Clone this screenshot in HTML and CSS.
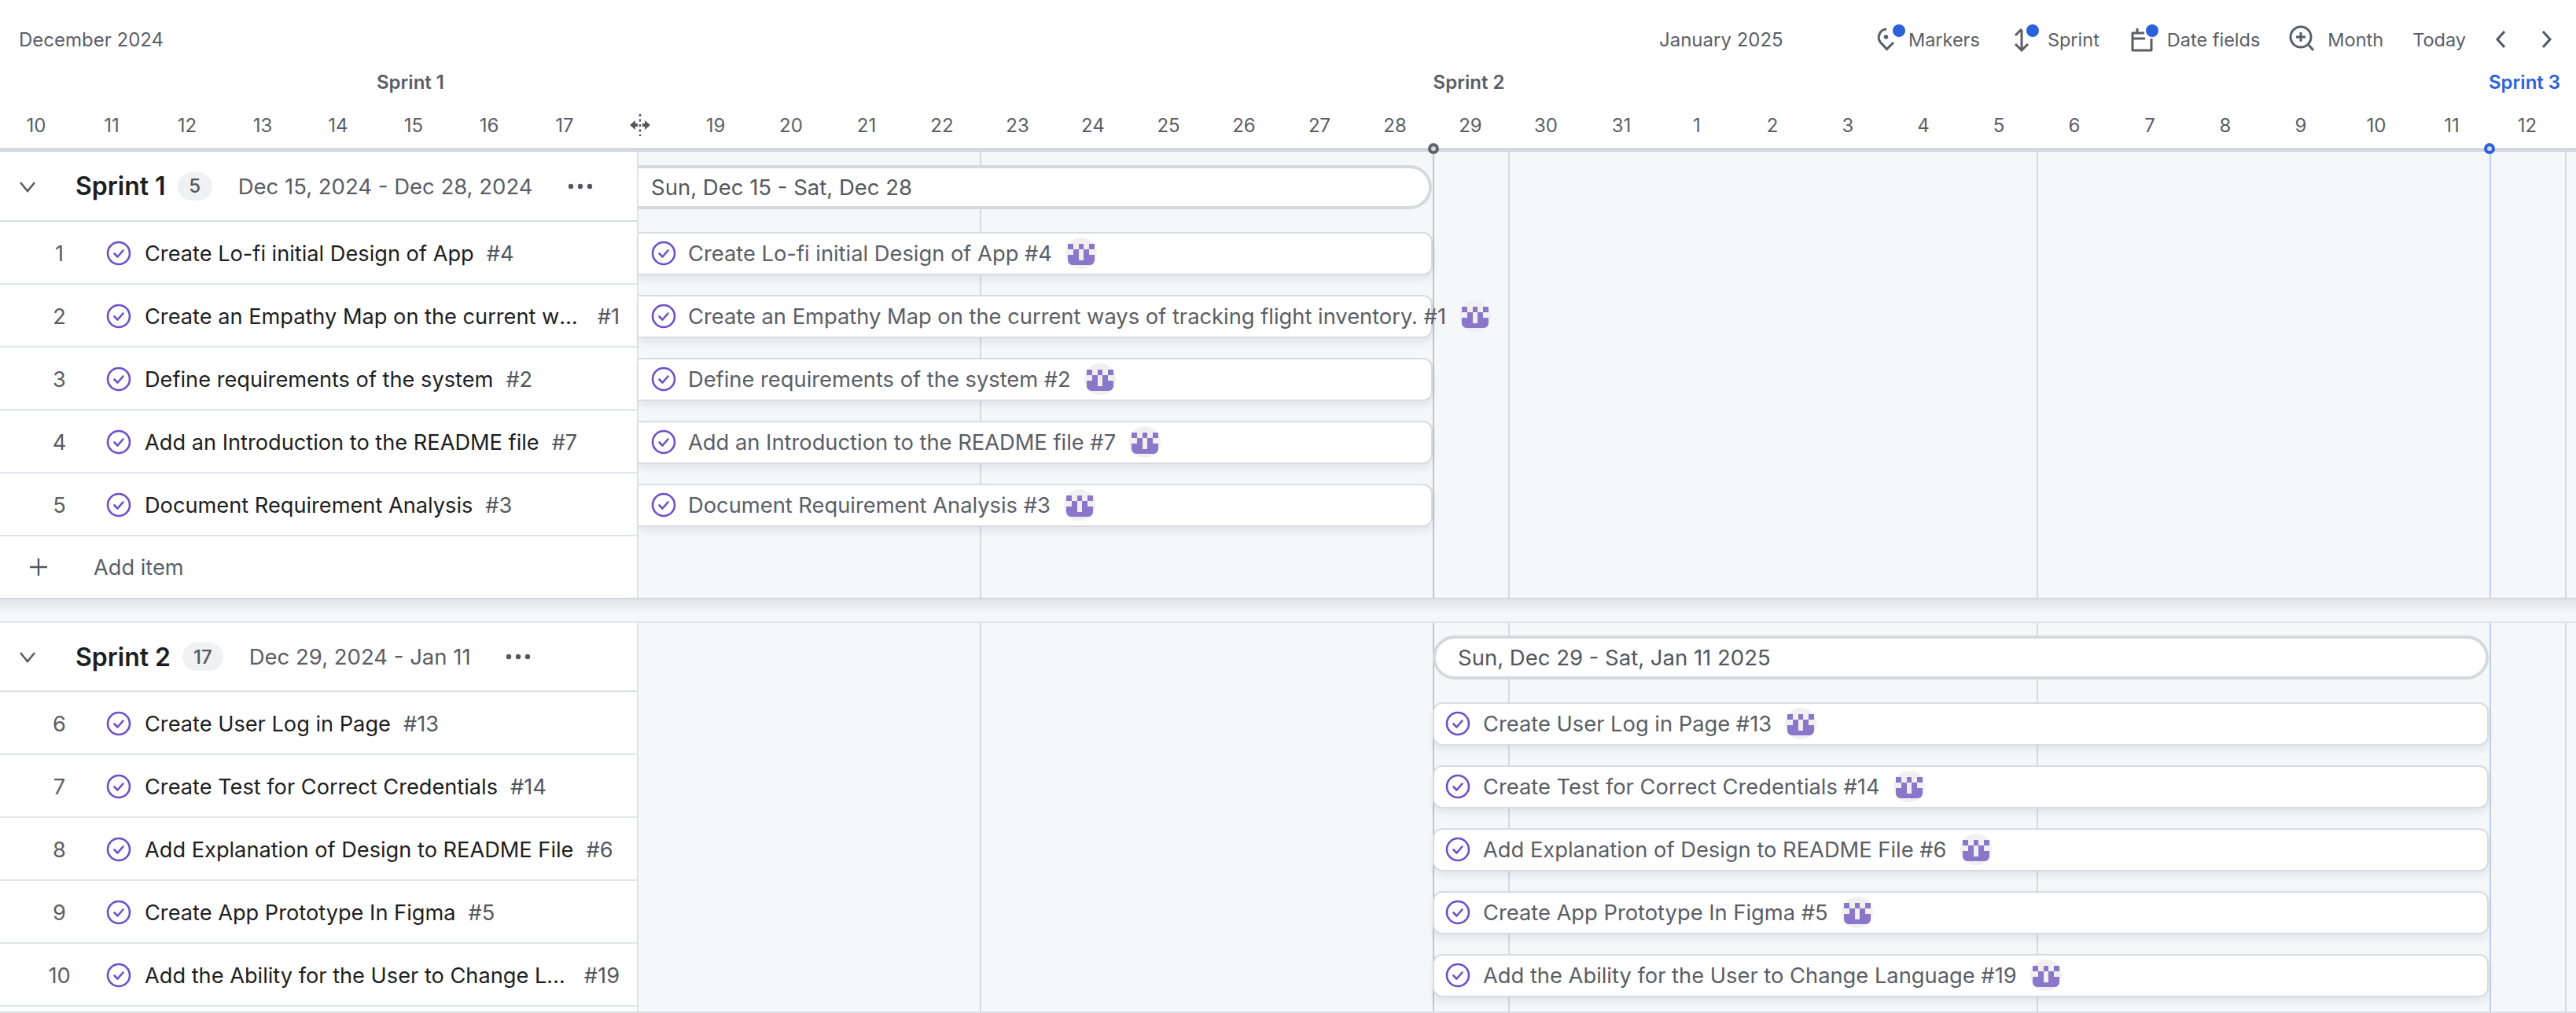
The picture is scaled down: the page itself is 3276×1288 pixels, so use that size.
FILE: index.html
```html
<!DOCTYPE html>
<html>
    <head>
        <title>Roadmap</title>
        <link rel="stylesheet" href="styles.css">
    </head>
    <body>
        <!-- shared icons -->
        <svg class="defs" width="0" height="0">
            <symbol id="check" viewBox="0 0 32 32">
                <circle cx="16" cy="16" r="14" fill="none" stroke="#6f4fc6" stroke-width="2.6"/>
                <path d="M10.5 16.5 L14.5 20.5 L21.5 12.5" fill="none" stroke="#6f4fc6" stroke-width="2.6" stroke-linecap="round" stroke-linejoin="round"/>
            </symbol>
            <symbol id="avatar" viewBox="0 0 40 40">
                <circle cx="20" cy="20" r="20" fill="#f0f0f1"/>
                <path fill="#8b77c9" d="M3 8h7v7H3zM17 8h6v7h-6zM30 8h7v7h-7zM10 15h7v7h-7zM23 15h7v7h-7zM3 22h14v7h6v-7h14v7a6 6 0 0 1-6 6H9a6 6 0 0 1-6-6z"/>
            </symbol>
            <symbol id="chevron" viewBox="0 0 24 24">
                <path d="M3 7 L12 18 L21 7" fill="none" stroke="#53575e" stroke-width="2.4"/>
            </symbol>
            <symbol id="dots" viewBox="0 0 32 8">
                <circle cx="4" cy="4" r="3.2" fill="#53575e"/>
                <circle cx="16" cy="4" r="3.2" fill="#53575e"/>
                <circle cx="28" cy="4" r="3.2" fill="#53575e"/>
            </symbol>
        </svg>

        <div class="gantt">
            <!-- Timeline header -->
            <div class="top">
                <div class="toolbar">
                    <span class="month first">December 2024</span>
                    <span class="month">January 2025</span>
                    <div class="tools">
                        <span class="tool tool-markers">
                            <span class="tool-icon">
                                <svg width="32" height="32" viewBox="0 0 32 32" fill="none" stroke="#5a5e66" stroke-width="3"><path d="M14 3 A10.5 10.5 0 0 0 7 20.5 L14.500 28.500 L23 20"/><circle cx="13.500" cy="13" r="2.800" fill="#5a5e66" stroke="none"/></svg>
                                <span class="dot"></span>
                            </span>
                            Markers
                        </span>
                        <span class="tool tool-sprint">
                            <span class="tool-icon">
                                <svg width="32" height="32" viewBox="0 0 32 32" fill="none" stroke="#5a5e66" stroke-width="3"><path d="M16 4 V30 M8 22 L16 30 L24 22 M8 11 L16 3"/></svg>
                                <span class="dot"></span>
                            </span>
                            Sprint
                        </span>
                        <span class="tool tool-dates">
                            <span class="tool-icon">
                                <svg width="32" height="32" viewBox="0 0 32 32" fill="none" stroke="#5a5e66" stroke-width="3"><path d="M20 8 H5 V30 H29 V15 M5 15 H21 M11 2 V8" stroke-linejoin="round"/></svg>
                                <span class="dot"></span>
                            </span>
                            Date fields
                        </span>
                        <span class="tool tool-month">
                            <svg width="36" height="36" viewBox="0 0 36 36" fill="none" stroke="#5a5e66" stroke-width="3"><circle cx="18" cy="15" r="13"/><path d="M18 9 V21 M12 15 H24 M27.500 24.500 L34 32"/></svg>
                            Month
                        </span>
                        <span class="tool tool-today">Today</span>
                        <svg class="nav nav-prev" width="14" height="24" viewBox="0 0 14 24" fill="none" stroke="#53575e" stroke-width="3"><path d="M12 2 L3 12 L12 22"/></svg>
                        <svg class="nav nav-next" width="14" height="24" viewBox="0 0 14 24" fill="none" stroke="#53575e" stroke-width="3"><path d="M2 2 L11 12 L2 22"/></svg>
                    </div>
                </div>
                <div class="sprints">
                    <span class="sprint-name s1">Sprint 1</span>
                    <span class="sprint-name s2">Sprint 2</span>
                    <span class="sprint-name s3">Sprint 3</span>
                </div>
                <div class="dates">
                    <span>10</span><span>11</span><span>12</span><span>13</span><span>14</span><span>15</span><span>16</span><span>17</span>
                    <span class="resize">
                        <svg width="30" height="30" viewBox="0 0 30 30"><path d="M15 1 V29" stroke="#53575e" stroke-width="2.500" stroke-dasharray="3 3.500" fill="none"/><path d="M2 15 L9 9 V13 H12 V17 H9 V21 Z M28 15 L21 9 V13 H18 V17 H21 V21 Z" fill="#53575e"/></svg>
                    </span>
                    <span>19</span><span>20</span><span>21</span><span>22</span><span>23</span><span>24</span><span>25</span><span>26</span><span>27</span><span>28</span><span>29</span><span>30</span><span>31</span>
                    <span>1</span><span>2</span><span>3</span><span>4</span><span>5</span><span>6</span><span>7</span><span>8</span><span>9</span><span>10</span><span>11</span><span>12</span>
                </div>
                <span class="pin pin-dark"></span>
                <span class="pin pin-blue"></span>
            </div>

            <!-- Sprint 1 -->
            <section class="group group-one">
                <div class="side">
                    <div class="group-head">
                        <svg class="chev" width="24" height="24"><use href="#chevron"/></svg>
                        <span class="group-name">Sprint 1</span>
                        <span class="badge">5</span>
                        <span class="group-dates">Dec 15, 2024 - Dec 28, 2024</span>
                        <svg class="more" width="32" height="8"><use href="#dots"/></svg>
                    </div>
                    <div class="row"><span class="num">1</span><svg class="check" width="32" height="32"><use href="#check"/></svg><span class="title">Create Lo-fi initial Design of App</span><span class="id">#4</span></div>
                    <div class="row"><span class="num">2</span><svg class="check" width="32" height="32"><use href="#check"/></svg><span class="title">Create an Empathy Map on the current ways of tracking flight inventory.</span><span class="id">#1</span></div>
                    <div class="row"><span class="num">3</span><svg class="check" width="32" height="32"><use href="#check"/></svg><span class="title">Define requirements of the system</span><span class="id">#2</span></div>
                    <div class="row"><span class="num">4</span><svg class="check" width="32" height="32"><use href="#check"/></svg><span class="title">Add an Introduction to the README file</span><span class="id">#7</span></div>
                    <div class="row"><span class="num">5</span><svg class="check" width="32" height="32"><use href="#check"/></svg><span class="title">Document Requirement Analysis</span><span class="id">#3</span></div>
                    <div class="add-row">
                        <svg width="24" height="24" viewBox="0 0 24 24" fill="none" stroke="#53575e" stroke-width="2.400"><path d="M12 1 V23 M1 12 H23"/></svg>
                        <span>Add item</span>
                    </div>
                </div>
                <div class="chart">
                    <div class="lane-head"><div class="pill">Sun, Dec 15 - Sat, Dec 28</div></div>
                    <div class="lane"><div class="bar"><svg class="check" width="32" height="32"><use href="#check"/></svg><span>Create Lo-fi initial Design of App #4</span><svg class="avatar" width="40" height="40"><use href="#avatar"/></svg></div></div>
                    <div class="lane"><div class="bar"><svg class="check" width="32" height="32"><use href="#check"/></svg><span>Create an Empathy Map on the current ways of tracking flight inventory. #1</span><svg class="avatar" width="40" height="40"><use href="#avatar"/></svg></div></div>
                    <div class="lane"><div class="bar"><svg class="check" width="32" height="32"><use href="#check"/></svg><span>Define requirements of the system #2</span><svg class="avatar" width="40" height="40"><use href="#avatar"/></svg></div></div>
                    <div class="lane"><div class="bar"><svg class="check" width="32" height="32"><use href="#check"/></svg><span>Add an Introduction to the README file #7</span><svg class="avatar" width="40" height="40"><use href="#avatar"/></svg></div></div>
                    <div class="lane"><div class="bar"><svg class="check" width="32" height="32"><use href="#check"/></svg><span>Document Requirement Analysis #3</span><svg class="avatar" width="40" height="40"><use href="#avatar"/></svg></div></div>
                </div>
            </section>

            <div class="group-gap"></div>

            <!-- Sprint 2 -->
            <section class="group group-two">
                <div class="side">
                    <div class="group-head">
                        <svg class="chev" width="24" height="24"><use href="#chevron"/></svg>
                        <span class="group-name">Sprint 2</span>
                        <span class="badge">17</span>
                        <span class="group-dates">Dec 29, 2024 - Jan 11</span>
                        <svg class="more" width="32" height="8"><use href="#dots"/></svg>
                    </div>
                    <div class="row"><span class="num">6</span><svg class="check" width="32" height="32"><use href="#check"/></svg><span class="title">Create User Log in Page</span><span class="id">#13</span></div>
                    <div class="row"><span class="num">7</span><svg class="check" width="32" height="32"><use href="#check"/></svg><span class="title">Create Test for Correct Credentials</span><span class="id">#14</span></div>
                    <div class="row"><span class="num">8</span><svg class="check" width="32" height="32"><use href="#check"/></svg><span class="title">Add Explanation of Design to README File</span><span class="id">#6</span></div>
                    <div class="row"><span class="num">9</span><svg class="check" width="32" height="32"><use href="#check"/></svg><span class="title">Create App Prototype In Figma</span><span class="id">#5</span></div>
                    <div class="row"><span class="num">10</span><svg class="check" width="32" height="32"><use href="#check"/></svg><span class="title">Add the Ability for the User to Change Language</span><span class="id">#19</span></div>
                </div>
                <div class="chart">
                    <div class="lane-head"><div class="pill">Sun, Dec 29 - Sat, Jan 11 2025</div></div>
                    <div class="lane"><div class="bar"><svg class="check" width="32" height="32"><use href="#check"/></svg><span>Create User Log in Page #13</span><svg class="avatar" width="40" height="40"><use href="#avatar"/></svg></div></div>
                    <div class="lane"><div class="bar"><svg class="check" width="32" height="32"><use href="#check"/></svg><span>Create Test for Correct Credentials #14</span><svg class="avatar" width="40" height="40"><use href="#avatar"/></svg></div></div>
                    <div class="lane"><div class="bar"><svg class="check" width="32" height="32"><use href="#check"/></svg><span>Add Explanation of Design to README File #6</span><svg class="avatar" width="40" height="40"><use href="#avatar"/></svg></div></div>
                    <div class="lane"><div class="bar"><svg class="check" width="32" height="32"><use href="#check"/></svg><span>Create App Prototype In Figma #5</span><svg class="avatar" width="40" height="40"><use href="#avatar"/></svg></div></div>
                    <div class="lane"><div class="bar"><svg class="check" width="32" height="32"><use href="#check"/></svg><span>Add the Ability for the User to Change Language #19</span><svg class="avatar" width="40" height="40"><use href="#avatar"/></svg></div></div>
                </div>
            </section>
        </div>
    </body>
</html>
```

FILE: styles.css
```css
*{
    box-sizing: border-box;
}
body{
    font-family: Inter, "Liberation Sans", sans-serif;
    margin: 0;
    background-color: #fff;
    color: #1d1e21;
    font-size: 27.2px;
}
.defs{
    position: absolute;
}
.gantt{
    display: flex;
    flex-direction: column;
    width: 3276px;
    height: 1288px;
    overflow: hidden;
    border-bottom: 2px solid #dde0e5;
}

/* header */
.top{
    position: relative;
    height: 193px;
    flex: none;
    border-bottom: 5px solid #d2d8de;
    color: #5a5e66;
    font-size: 24px;
}
.toolbar{
    display: flex;
    align-items: center;
    height: 78px;
    padding-top: 22px;
}
.month{
    flex: none;
    white-space: nowrap;
}
.month.first{
    width: 2110px;
    padding-left: 24px;
}
.tools{
    display: flex;
    align-items: center;
    margin-left: auto;
    padding-right: 30px;
    font-size: 23.5px;
}
.tool{
    display: flex;
    align-items: center;
    white-space: nowrap;
}
.tool-icon{
    position: relative;
    display: flex;
    margin-right: 17px;
}
.tool-markers .tool-icon{
    margin-right: 10px;
}
.tool-sprint, .tool-dates, .tool-today{
    margin-left: 37px;
}
.tool-month{
    margin-left: 34px;
    gap: 16px;
}
.dot{
    position: absolute;
    top: -3px;
    right: -6px;
    width: 16px;
    height: 16px;
    border-radius: 50%;
    background-color: #2b62d9;
}
.nav-prev{
    margin-left: 37px;
}
.nav-next{
    margin-left: 45px;
}
.sprints{
    display: flex;
    align-items: center;
    height: 52px;
    font-weight: 600;
}
.sprint-name{
    text-align: center;
    white-space: nowrap;
}
.s1{
    width: 1044px;
}
.s2{
    width: 1648px;
}
.s3{
    margin-left: 473px;
    color: #2b62d9;
}
.dates{
    display: grid;
    grid-template-columns: repeat(34, 96px);
    align-items: center;
    height: 58px;
    margin-left: -2px;
    text-align: center;
}
.resize{
    display: flex;
    justify-content: center;
}
.pin{
    position: absolute;
    bottom: -8px;
    width: 14px;
    height: 14px;
    border-radius: 50%;
    background-color: #d2d8de;
    border: 4px solid #5f656d;
}
.pin-dark{
    left: 1816px;
}
.pin-blue{
    left: 3159px;
    border-color: #2b62d9;
}

/* groups */
.group{
    display: flex;
}
.group-two{
    flex: 1;
    border-top: 2px solid #e2e5e9;
}
.group-gap{
    height: 30px;
    flex: none;
    border-top: 2px solid #d5d9de;
    background: linear-gradient(#e2e4e8, #f6f7f9 18px);
}
.side{
    width: 812px;
    flex: none;
    border-right: 2px solid #dfe2e6;
    background-color: #fff;
}
.group-head{
    display: flex;
    align-items: center;
    height: 88px;
    padding-left: 23px;
    border-bottom: 2px solid #d6dade;
}
.group-one .group-head{
    height: 89px;
}
.chev{
    flex: none;
}
.group-name{
    margin-left: 49px;
    font-size: 32px;
    font-weight: 600;
    white-space: nowrap;
}
.badge{
    display: flex;
    align-items: center;
    justify-content: center;
    min-width: 44px;
    height: 36px;
    margin-left: 15px;
    padding: 0 14px;
    border-radius: 18px;
    background-color: #eff1f3;
    color: #53575e;
    font-size: 24px;
    font-weight: 500;
}
.group-dates{
    margin-left: 33px;
    color: #5a5e66;
    font-size: 27.5px;
    white-space: nowrap;
}
.more{
    flex: none;
    margin-left: 44px;
}
.row{
    display: flex;
    align-items: center;
    height: 80px;
    padding-top: 2px;
    padding-right: 22px;
    border-bottom: 2px solid #e2e5e9;
}
.num{
    width: 135px;
    flex: none;
    padding-left: 16px;
    text-align: center;
    color: #5a5e66;
}
.row .check{
    flex: none;
    margin-right: 17px;
}
.title{
    min-width: 0;
    overflow: hidden;
    white-space: nowrap;
    text-overflow: ellipsis;
}
.id{
    flex: none;
    margin-left: 16px;
    color: #53575e;
}
.add-row{
    display: flex;
    align-items: center;
    height: 78px;
    padding-left: 37px;
    gap: 58px;
    color: #5a5e66;
}

/* chart side */
.chart{
    flex: 1;
    background-color: #f6f7fa;
    background-image:
        linear-gradient(#d5dae2, #d5dae2),
        linear-gradient(#c1c5cc, #c1c5cc),
        linear-gradient(#d5dae2, #d5dae2),
        linear-gradient(#d5dae2, #d5dae2),
        linear-gradient(#bcd3ee, #bcd3ee),
        linear-gradient(#d5dae2, #d5dae2);
    background-size: 2px 100%;
    background-repeat: no-repeat;
    background-position: 434px 0, 1010px 0, 1106px 0, 1778px 0, 2354px 0, 2450px 0;
}
.lane-head{
    display: flex;
    align-items: center;
    height: 89px;
}
.group-two .lane-head{
    height: 88px;
}
.lane{
    display: flex;
    align-items: center;
    height: 80px;
}
.group-one .pill, .group-one .bar{
    width: 1009px;
    border-left: none;
    border-top-left-radius: 0;
    border-bottom-left-radius: 0;
    padding-left: 16px;
}
.group-one .bar{
    width: 1010px;
}
.group-two .pill, .group-two .bar{
    width: 1343px;
    margin-left: 1010px;
    padding-left: 14px;
}
.pill{
    display: flex;
    align-items: center;
    height: 56px;
    border: 4px solid #d5d9de;
    border-radius: 28px;
    background-color: #fff;
    color: #53575e;
    font-size: 27.5px;
    white-space: nowrap;
}
.group-two .pill{
    padding-left: 28px;
}
.bar{
    display: flex;
    align-items: center;
    height: 55px;
    border: 2px solid #d8dbe0;
    border-radius: 12px;
    background-color: #fff;
    box-shadow: 0 6px 10px rgba(30, 40, 60, 0.08);
    color: #5a5e66;
    font-size: 27.3px;
    white-space: nowrap;
}
.bar .check{
    flex: none;
    margin-right: 15px;
}
.group-two .bar .check{
    margin-right: 16px;
}
.avatar{
    flex: none;
    margin-left: 17px;
}
```
